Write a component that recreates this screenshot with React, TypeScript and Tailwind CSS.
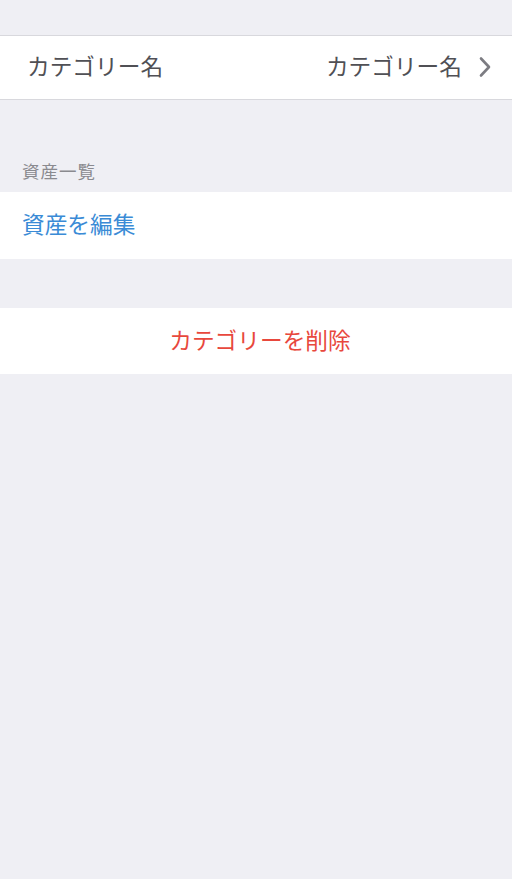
const font = "font-['Noto_Sans_CJK_JP','Noto_Sans',sans-serif]";

function ChevronRight() {
  return (
    <svg width="14" height="22" viewBox="0 0 14 22" fill="none" className="shrink-0">
      <path d="M3 2.5 L11 11 L3 19.5" stroke="#7c7c82" strokeWidth="2.6" strokeLinecap="round" strokeLinejoin="round" />
    </svg>
  );
}

export default function App() {
  return (
    <div className={`min-h-[879px] w-full bg-[#efeff4] ${font}`}>
      <div className="h-[35px]" />

      <div className="flex h-[65px] items-center justify-between border-y border-[#d8d8dd] bg-white pl-[27px] pr-[20px]">
        <span className="pb-[2px] text-[22.7px] leading-none text-[#505055]">カテゴリー名</span>
        <div className="flex items-center gap-[16px]">
          <span className="pb-[2px] text-[22.7px] leading-none text-[#505055]">カテゴリー名</span>
          <ChevronRight />
        </div>
      </div>

      <div className="flex h-[92px] items-end px-[22px] pb-[13px]">
        <span className="text-[17.5px] leading-none tracking-[1px] text-[#8a8a8f]">資産一覧</span>
      </div>

      <div className="flex h-[67px] items-center bg-white px-[22px]">
        <span className="pb-[2px] text-[22.7px] leading-none text-[#3a8bd6]">資産を編集</span>
      </div>

      <div className="h-[49px]" />

      <div className="flex h-[66px] items-center justify-center bg-white">
        <span className="pb-[1px] pl-[8px] text-[22.7px] leading-none text-[#e8483d]">カテゴリーを削除</span>
      </div>
    </div>
  );
}
